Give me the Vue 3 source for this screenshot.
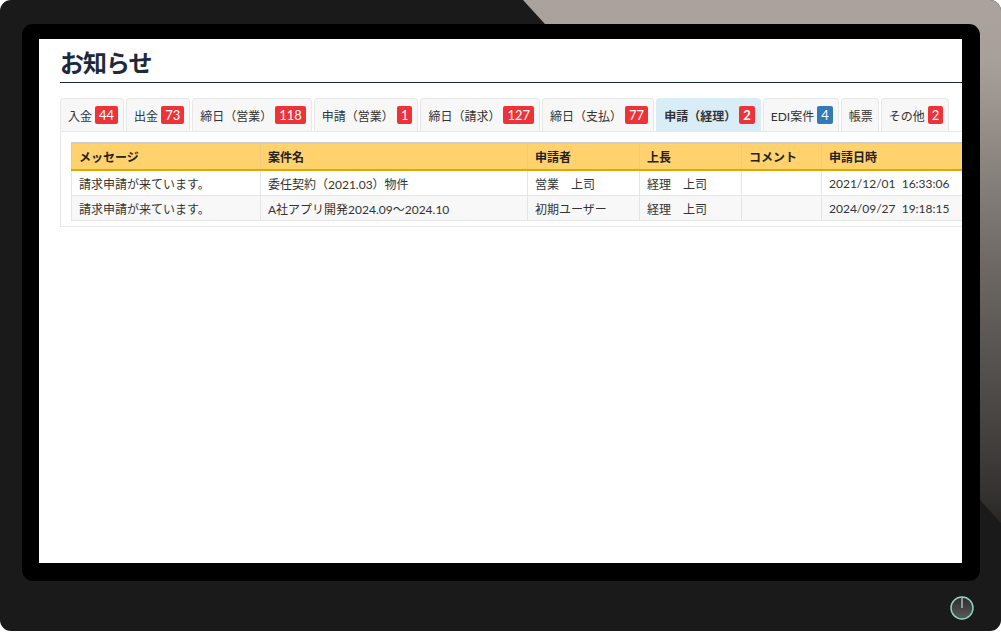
<script setup>
const tabs = [
  { label: '入金', count: 44 },
  { label: '出金', count: 73 },
  { label: '締日（営業）', count: 118 },
  { label: '申請（営業）', count: 1 },
  { label: '締日（請求）', count: 127 },
  { label: '締日（支払）', count: 77 },
  { label: '申請（経理）', count: 2, active: true },
  { label: 'EDI案件', count: 4, info: true },
  { label: '帳票' },
  { label: 'その他', count: 2 },
];

const columns = ['メッセージ', '案件名', '申請者', '上長', 'コメント', '申請日時'];

const rows = [
  ['請求申請が来ています。', '委任契約（2021.03）物件', '営業\u3000上司', '経理\u3000上司', '', '2021/12/01\u00a0\u00a016:33:06'],
  ['請求申請が来ています。', 'A社アプリ開発2024.09～2024.10', '初期ユーザー', '経理\u3000上司', '', '2024/09/27\u00a0\u00a019:18:15'],
];
</script>

<template>
  <div class="device">
    <div class="shine"></div>
    <div class="bezel">
      <div class="screen">
        <h1 class="title">お知らせ</h1>
        <ul class="tabs">
          <li v-for="tab in tabs" :key="tab.label" class="tab" :class="{ active: tab.active }">
            {{ tab.label }}
            <span v-if="tab.count" class="badge" :class="{ info: tab.info }">{{ tab.count }}</span>
          </li>
        </ul>
        <div class="panel">
          <table class="list">
            <colgroup>
              <col style="width: 189px" />
              <col style="width: 267px" />
              <col style="width: 112px" />
              <col style="width: 102px" />
              <col style="width: 80px" />
              <col style="width: 160px" />
            </colgroup>
            <thead>
              <tr>
                <th v-for="col in columns" :key="col">{{ col }}</th>
              </tr>
            </thead>
            <tbody>
              <tr v-for="(row, i) in rows" :key="i">
                <td v-for="(cell, j) in row" :key="j">{{ cell }}</td>
              </tr>
            </tbody>
          </table>
        </div>
      </div>
    </div>
    <div class="foot">
      <svg class="power" width="26" height="26" viewBox="0 0 26 26">
        <defs>
          <linearGradient id="face" x1="0" y1="0" x2="0" y2="1">
            <stop offset="0" stop-color="#2c2c2c" />
            <stop offset="1" stop-color="#5a5a58" />
          </linearGradient>
        </defs>
        <circle cx="13" cy="13" r="11" fill="url(#face)" stroke="#8fd8c6" stroke-width="1.4" />
        <line x1="13" y1="3" x2="13" y2="13" stroke="#c8ddd8" stroke-width="1.2" />
      </svg>
    </div>
  </div>
</template>

<style scoped>
.device {
  position: relative;
  width: 1001px;
  height: 631px;
  box-sizing: border-box;
  padding: 24px 21px 0 22px;
  background: #1b1a1b;
  border-radius: 11px;
  overflow: hidden;
  font-family: Lato, "Noto Sans CJK JP", sans-serif;
  font-size: 12px;
  color: #333;
}

.shine {
  position: absolute;
  inset: 0;
  background: linear-gradient(to bottom, #aba29e 0, #a8a09b 60px, #6f6a66 260px, #33312f 500px, #1f1e1e 540px);
  clip-path: polygon(523px 0, 1001px 0, 1001px 523px);
}

.bezel {
  position: relative;
  height: 557px;
  box-sizing: border-box;
  padding: 15px 18px 18px 17px;
  background: #000;
  border-radius: 11px;
}

.screen {
  height: 100%;
  box-sizing: border-box;
  padding: 0 0 0 21px;
  background: #fff;
  overflow: hidden;
}

.title {
  margin: 0;
  height: 44px;
  box-sizing: border-box;
  padding-top: 8px;
  border-bottom: 1px solid #1b2a3d;
  font-size: 24px;
  line-height: 32px;
  letter-spacing: -1px;
  font-weight: 700;
  color: #1b2a3d;
}

.tabs {
  display: flex;
  gap: 2px;
  margin: 15px 0 0;
  padding: 0;
  list-style: none;
}

.tab {
  display: flex;
  align-items: center;
  gap: 3px;
  height: 32px;
  padding: 0 5px 0 7px;
  background: #f7f7f7;
  border: 1px solid #e8e8e8;
  border-bottom: 0;
  border-radius: 4px 4px 0 0;
  white-space: nowrap;
}

.tab.active {
  background: #d9edf7;
  border-color: #d9edf7;
  font-weight: 700;
}

.badge {
  height: 18px;
  padding: 0 4px;
  background: #ee3338;
  border-radius: 2px;
  color: #fff;
  font-size: 13px;
  line-height: 18px;
}

.badge.info {
  background: #337ab7;
}

.panel {
  width: 1000px;
  box-sizing: border-box;
  padding: 10px 10px 5px;
  border: 1px solid #e8e8e8;
}

.list {
  table-layout: fixed;
  width: 910px;
  border-collapse: collapse;
}

th {
  height: 25px;
  padding: 0 7px;
  background: #ffd26e;
  border-top: 2px solid #ccc;
  border-bottom: 2px solid #e5a500;
  border-left: 1px solid #eccb85;
  text-align: left;
  font-weight: 700;
  color: #222;
}

td {
  height: 24px;
  padding: 0 7px;
  border: 1px solid #e5e5e5;
  white-space: nowrap;
}

tbody tr:nth-child(2) td {
  background: #f8f8f8;
}

.foot {
  display: flex;
  justify-content: flex-end;
  padding: 14px 5px 0 0;
}
</style>

<style>
html, body {
  background: #fff;
}
</style>
